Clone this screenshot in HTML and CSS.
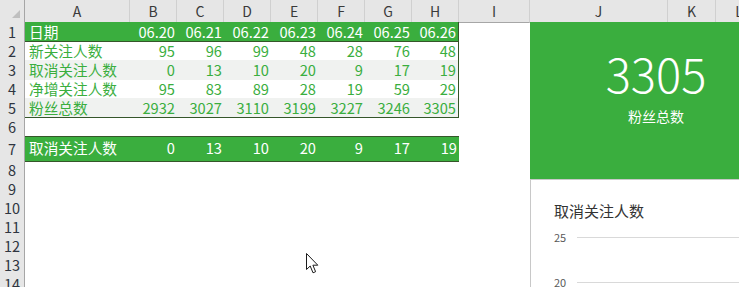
FILE: index.html
```html
<!DOCTYPE html>
<html lang="zh-CN">
<head>
    <meta charset="UTF-8">
    <meta name="viewport" content="width=device-width, initial-scale=1.0">
    <title>粉丝数据</title>
    <link rel="stylesheet" href="styles.css">
</head>
<body>
 <div id="planilha">
    <div class="linha cabecalho">
        <div class="canto"><span class="triangulo"></span></div>
        <div class="col">A</div>
        <div class="col">B</div>
        <div class="col">C</div>
        <div class="col">D</div>
        <div class="col">E</div>
        <div class="col">F</div>
        <div class="col">G</div>
        <div class="col">H</div>
        <div class="col">I</div>
        <div class="col">J</div>
        <div class="col">K</div>
        <div class="col">L</div>
    </div>

    <div class="linha titulo topo">
        <div class="num">1</div>
        <div class="rotulo">日期</div>
        <div class="valor">06.20</div>
        <div class="valor">06.21</div>
        <div class="valor">06.22</div>
        <div class="valor">06.23</div>
        <div class="valor">06.24</div>
        <div class="valor">06.25</div>
        <div class="valor ultimo">06.26</div>
    </div>

    <div class="linha dados">
        <div class="num">2</div>
        <div class="rotulo">新关注人数</div>
        <div class="valor">95</div>
        <div class="valor">96</div>
        <div class="valor">99</div>
        <div class="valor">48</div>
        <div class="valor">28</div>
        <div class="valor">76</div>
        <div class="valor ultimo">48</div>
    </div>

    <div class="linha dados faixa">
        <div class="num">3</div>
        <div class="rotulo">取消关注人数</div>
        <div class="valor">0</div>
        <div class="valor">13</div>
        <div class="valor">10</div>
        <div class="valor">20</div>
        <div class="valor">9</div>
        <div class="valor">17</div>
        <div class="valor ultimo">19</div>
    </div>

    <div class="linha dados">
        <div class="num">4</div>
        <div class="rotulo">净增关注人数</div>
        <div class="valor">95</div>
        <div class="valor">83</div>
        <div class="valor">89</div>
        <div class="valor">28</div>
        <div class="valor">19</div>
        <div class="valor">59</div>
        <div class="valor ultimo">29</div>
    </div>

    <div class="linha dados faixa fim">
        <div class="num">5</div>
        <div class="rotulo">粉丝总数</div>
        <div class="valor">2932</div>
        <div class="valor">3027</div>
        <div class="valor">3110</div>
        <div class="valor">3199</div>
        <div class="valor">3227</div>
        <div class="valor">3246</div>
        <div class="valor ultimo">3305</div>
    </div>

    <div class="linha"><div class="num">6</div></div>

    <div class="linha destaque">
        <div class="num">7</div>
        <div class="rotulo">取消关注人数</div>
        <div class="valor">0</div>
        <div class="valor">13</div>
        <div class="valor">10</div>
        <div class="valor">20</div>
        <div class="valor">9</div>
        <div class="valor">17</div>
        <div class="valor">19</div>
    </div>

    <div class="linha"><div class="num">8</div></div>
    <div class="linha"><div class="num">9</div></div>
    <div class="linha"><div class="num">10</div></div>
    <div class="linha"><div class="num">11</div></div>
    <div class="linha"><div class="num">12</div></div>
    <div class="linha"><div class="num">13</div></div>
    <div class="linha"><div class="num">14</div></div>

    <!-- formas flutuantes por cima da planilha -->
    <div id="cartao">
        <div id="cartao-numero">3305</div>
        <div id="cartao-texto">粉丝总数</div>
    </div>

    <div id="grafico">
        <div id="grafico-titulo">取消关注人数</div>
        <div class="eixo"><span>25</span><i></i></div>
        <div class="eixo"><span>20</span><i></i></div>
    </div>

    <svg id="cursor" width="13" height="21" viewBox="0 0 13 21">
        <path d="M0.5 0.5 L0.5 16.5 L4.2 13 L7 19.8 L9.6 18.7 L6.9 12.2 L11.8 12.2 Z" fill="#fff" stroke="#1b1b1b" stroke-width="1"/>
    </svg>
 </div>
</body>
</html>
```

FILE: styles.css
```css
* {
    box-sizing: border-box;
    margin: 0;
    padding: 0;
}

body {
    background-color: #fff;
    font-family: "Noto Sans CJK SC", "Noto Sans", sans-serif;
    overflow: hidden;
}

#planilha {
    position: relative;
    width: 739px;
    height: 287px;
    overflow: hidden;
}

.linha {
    display: grid;
    grid-template-columns: 25px 105px repeat(7, 47px) 71px 138px 48px 47px;
    height: 19px;
}

.cabecalho {
    height: 22px;
}

.canto, .col {
    background-color: #e6e6e6;
    border-bottom: 1px solid #a6a6a6;
}
.canto {
    display: flex;
    justify-content: flex-end;
    align-items: flex-end;
    padding: 0 4px 4px 0;
    border-right: 1px solid #a6a6a6;
}
.triangulo {
    width: 0;
    height: 0;
    border-left: 8px solid transparent;
    border-bottom: 8px solid #bfbfbf;
}
.col {
    border-right: 1px solid #d0d0d0;
    text-align: center;
    font-size: 14px;
    line-height: 22px;
    color: #3a3a3a;
}

.num {
    background-color: #e6e6e6;
    border-right: 1px solid #a6a6a6;
    border-bottom: 1px solid #c4c4c4;
    text-align: center;
    font-size: 14.5px;
    line-height: 19px;
    color: #2f3540;
}

.rotulo, .valor {
    font-size: 14.67px;
    line-height: 20px;
    padding: 0 2px 0 4px;
    white-space: nowrap;
    overflow: hidden;
}
.valor {
    text-align: right;
}

.titulo .rotulo, .titulo .valor {
    background-color: #3aae3e;
    color: #fff;
    border-bottom: 1px solid #35562a;
}

.dados .rotulo, .dados .valor {
    color: #3aae3e;
}
.faixa .rotulo, .faixa .valor {
    background-color: #f0f2f0;
}
.fim .rotulo, .fim .valor {
    border-bottom: 1px solid #35562a;
}
.valor.ultimo {
    border-right: 1px solid #35562a;
}

.destaque {
    height: 24px;
}
.destaque .num {
    line-height: 25px;
}
.destaque .rotulo, .destaque .valor {
    background-color: #3aae3e;
    color: #fff;
    line-height: 22px;
    border-top: 1px solid #35562a;
    border-bottom: 1px solid #35562a;
}

#cartao {
    position: absolute;
    left: 530px;
    top: 22px;
    width: 252px;
    height: 157px;
    background-color: #3aae3e;
    color: #fff;
    text-align: center;
    padding-top: 23px;
}
#cartao-numero {
    font-size: 47px;
    font-weight: 300;
    line-height: 56px;
}
#cartao-texto {
    font-size: 14px;
    line-height: 20px;
    margin-top: 5px;
}

#grafico {
    position: absolute;
    left: 530px;
    top: 179px;
    width: 260px;
    height: 130px;
    background-color: #fff;
    border: 1px solid #c8c8c8;
    padding: 20px 0 0 23px;
}
#grafico-titulo {
    font-size: 15px;
    line-height: 22px;
    color: #333;
}
.eixo {
    display: flex;
    align-items: center;
    gap: 12px;
    height: 16px;
    margin-top: 7px;
}
.eixo + .eixo {
    margin-top: 29px;
}
.eixo span {
    font-size: 11px;
    color: #595959;
    width: 11px;
}
.eixo i {
    flex-grow: 1;
    border-top: 1px solid #d9d9d9;
}

#cursor {
    position: absolute;
    left: 306px;
    top: 253px;
}
```
